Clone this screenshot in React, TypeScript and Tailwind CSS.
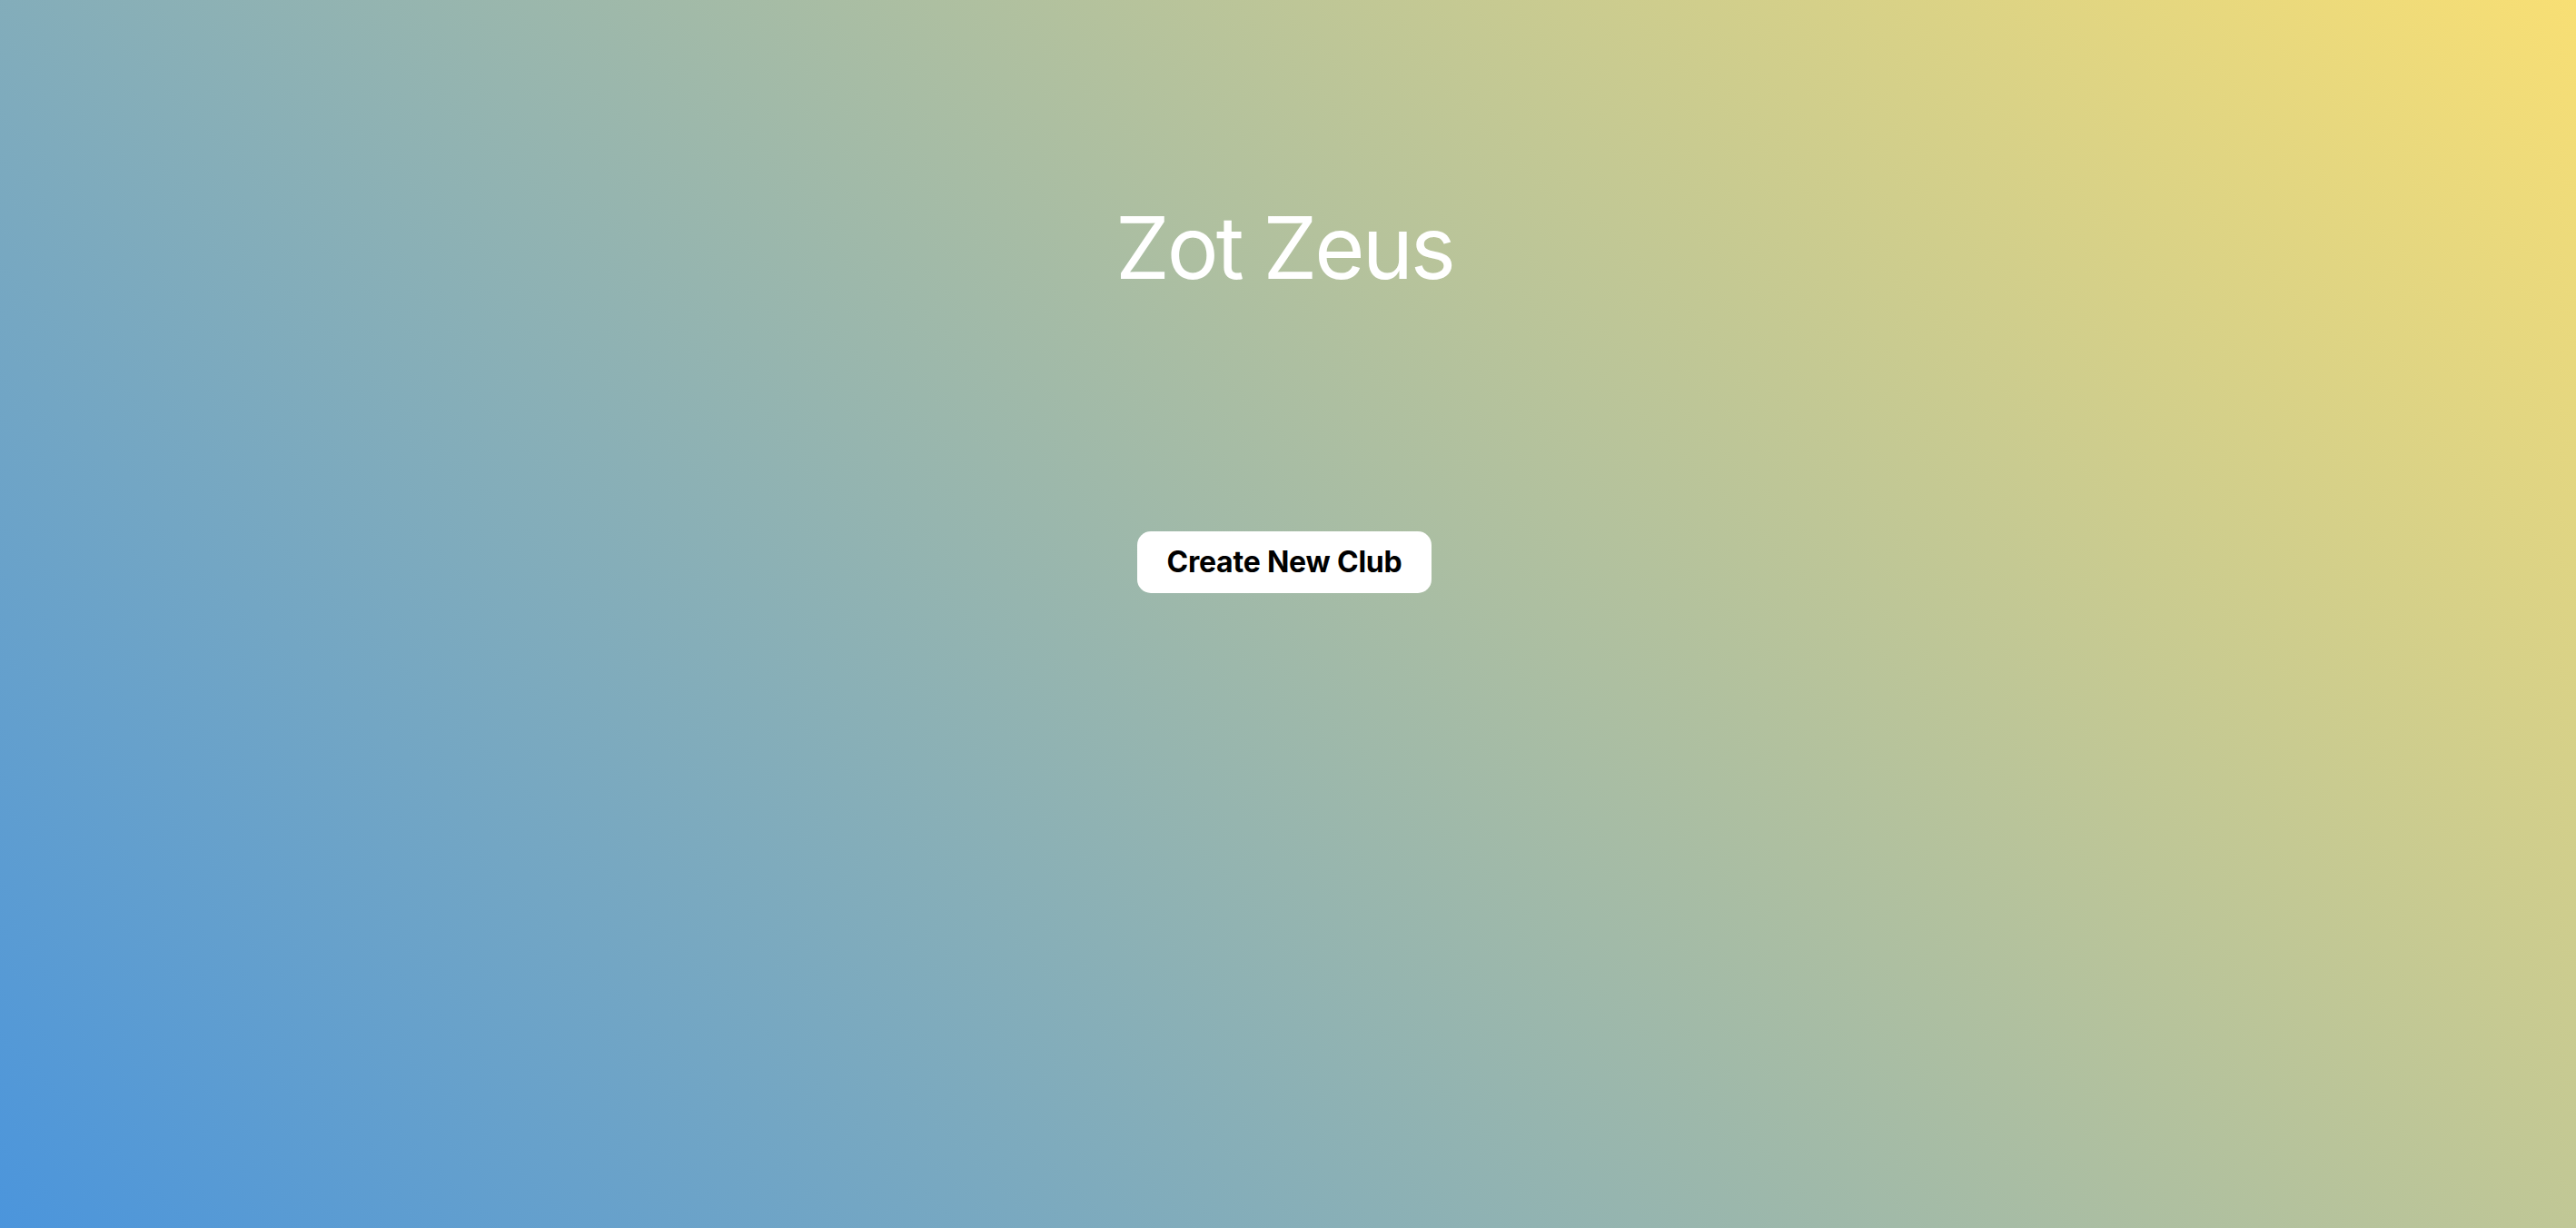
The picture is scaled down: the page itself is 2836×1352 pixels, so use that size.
export default function App() {
  return (
    <div
      className="flex h-screen w-full flex-col items-center bg-[linear-gradient(45deg,#4b95dc,#f8df74)] pt-[225px] pr-[8px]"
      style={{ fontFamily: "Inter, 'Noto Sans', sans-serif" }}
    >
      <h1 className="text-[95px] leading-[95px] font-normal tracking-[-3px] text-white">Zot Zeus</h1>
      <button className="mt-[265px] flex h-[68px] items-center rounded-[15px] bg-white px-[32px] text-[32px] font-bold tracking-[-0.2px] text-black">
        Create New Club
      </button>
    </div>
  );
}
